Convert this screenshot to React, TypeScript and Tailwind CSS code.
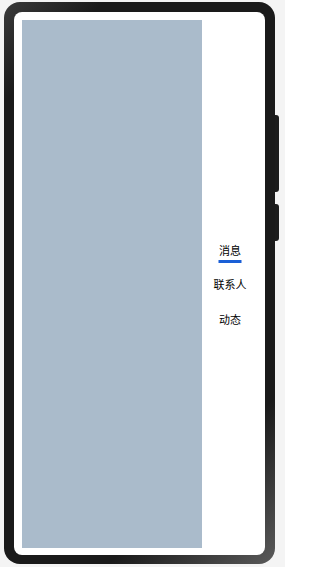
import React from "react";

const tabs = ["消息", "联系人", "动态"];

function TabBar({ active }: { active: number }) {
  return (
    <div className="flex flex-1 flex-col items-center justify-center">
      {tabs.map((label, i) => (
        <div key={label} className="flex h-[34.5px] items-center justify-center">
          <span className="relative text-[11px] leading-[14px] text-black">
            {label}
            {i === active && (
              <span className="absolute left-1/2 top-[17px] h-[3px] w-[23px] -translate-x-1/2 bg-[#1a5fd6]" />
            )}
          </span>
        </div>
      ))}
    </div>
  );
}

export default function App() {
  return (
    <div
      className="h-[567px] w-[285px] bg-[#f4f4f4] pl-[4px] pt-[2px]"
      style={{ fontFamily: '"Noto Sans CJK SC", "Noto Sans", sans-serif' }}
    >
      <div className="relative h-[562px] w-[271px]">
        {/* side buttons */}
        <div className="absolute left-[269px] top-[113px] h-[77px] w-[6px] rounded-r-[3px] bg-[#1c1c1c]" />
        <div className="absolute left-[269px] top-[202px] h-[37px] w-[6px] rounded-r-[3px] bg-[#1c1c1c]" />
        <div className="relative h-full w-full rounded-[16px] bg-[linear-gradient(135deg,#3a3a3a_0%,#1a1a1a_12%,#1a1a1a_80%,#5a5a5a_100%)] p-[10px] pb-[9px]">
          <div className="flex h-full w-full rounded-[8px] bg-white p-[8px] pr-[7px] pb-[7px]">
            <div className="h-full w-[180px] bg-[#aabbcb]" />
            <TabBar active={0} />
          </div>
        </div>
      </div>
    </div>
  );
}
